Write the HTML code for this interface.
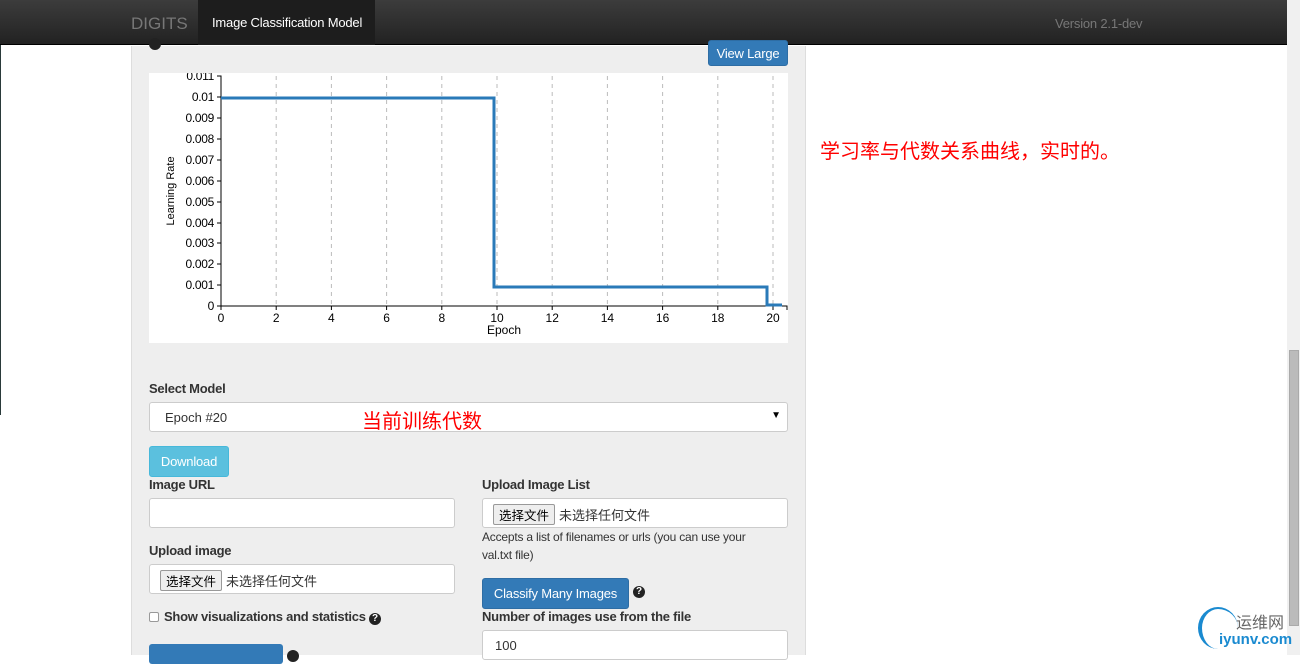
<!DOCTYPE html>
<html><head><meta charset="utf-8"><style>
*{box-sizing:border-box}
body{margin:0;width:1300px;height:655px;overflow:hidden;background:#fff;font-family:"Liberation Sans","Noto Sans CJK SC",sans-serif;position:relative;font-size:13px;color:#333}
.nav{position:absolute;left:0;top:0;width:1287px;height:45px;background:linear-gradient(#3c3c3c,#222);border-bottom:1px solid #000}
.nav .brand{position:absolute;left:131px;top:14px;font-size:17px;color:#777}
.nav .act{position:absolute;left:198px;top:0;width:177px;height:45px;background:#1d1d1d;color:#fff;font-size:13px;padding-top:15px;padding-left:14px;letter-spacing:-0.2px}
.nav .ver{position:absolute;left:1055px;top:16px;color:#777;font-size:13px;letter-spacing:-0.2px}
.panel{position:absolute;left:131px;top:46px;width:675px;height:609px;background:#eeeeee;border-left:1px solid #ddd;border-right:1px solid #ddd}
.abs{position:absolute}
.lbl{position:absolute;font-weight:bold;font-size:13px;color:#333;letter-spacing:-0.25px}
.inp{position:absolute;background:#fff;border:1px solid #ccc;border-radius:3px}
.btn{position:absolute;color:#fff;border-radius:3px;font-size:13px;text-align:center;letter-spacing:-0.2px}
.fb{display:inline-block;background:#eee;border:1px solid #999;border-radius:2px;padding:0 5px;margin:5px 4px 0 10px;font-size:12.5px;color:#000}
.q{display:inline-block;width:12px;height:12px;border-radius:50%;background:#222;color:#fff;font-size:10px;font-weight:bold;text-align:center;line-height:12px;letter-spacing:0}
.red{position:absolute;color:#f00;font-size:20px}
</style></head><body>
<div class="abs" style="left:0;top:45px;width:1px;height:370px;background:#2a3a3a"></div>
<div class="nav"><span class="brand">DIGITS</span><div class="act">Image Classification Model</div><span class="ver">Version 2.1-dev</span></div>
<div class="abs" style="left:1287px;top:0;width:13px;height:655px;background:#f0f0f0"></div>
<div class="abs" style="left:1289px;top:350px;width:10px;height:276px;background:#bbb;border:1px solid #aaa"></div>
<div class="panel"></div>
<div class="abs q" style="left:149px;top:38px"></div>
<div class="btn" style="left:708px;top:40px;width:80px;height:26px;background:#337ab7;border:1px solid #2e6da4;padding-top:5px">View Large</div>
<svg class="abs" style="left:149px;top:73px" width="639" height="270" viewBox="149 73 639 270">
<rect x="149" y="73" width="639" height="270" fill="#fff"/>
<g stroke="#bbb" stroke-dasharray="4,4">
<line x1="276.2" y1="76" x2="276.2" y2="306"/><line x1="331.4" y1="76" x2="331.4" y2="306"/><line x1="386.6" y1="76" x2="386.6" y2="306"/><line x1="441.8" y1="76" x2="441.8" y2="306"/><line x1="497" y1="76" x2="497" y2="306"/><line x1="552.2" y1="76" x2="552.2" y2="306"/><line x1="607.4" y1="76" x2="607.4" y2="306"/><line x1="662.6" y1="76" x2="662.6" y2="306"/><line x1="717.8" y1="76" x2="717.8" y2="306"/><line x1="773" y1="76" x2="773" y2="306"/>
</g>
<g stroke="#000" fill="none"><path d="M217 76H221V306H217M221 306V310M221 306H787V310"/>
<path d="M217 97H221M217 118H221M217 139H221M217 160H221M217 181H221M217 202H221M217 223H221M217 243H221M217 264H221M217 285H221"/>
<path d="M276.2 306v4M331.4 306v4M386.6 306v4M441.8 306v4M497 306v4M552.2 306v4M607.4 306v4M662.6 306v4M717.8 306v4M773 306v4"/></g>
<g font-size="12" fill="#000" text-anchor="end" font-family="Liberation Sans" letter-spacing="-0.3">
<text x="214" y="80">0.011</text><text x="214" y="101">0.01</text><text x="214" y="122">0.009</text><text x="214" y="143">0.008</text><text x="214" y="164">0.007</text><text x="214" y="185">0.006</text><text x="214" y="206">0.005</text><text x="214" y="227">0.004</text><text x="214" y="247">0.003</text><text x="214" y="268">0.002</text><text x="214" y="289">0.001</text><text x="214" y="310">0</text></g>
<g font-size="12" fill="#000" text-anchor="middle" font-family="Liberation Sans">
<text x="221" y="322">0</text><text x="276.2" y="322">2</text><text x="331.4" y="322">4</text><text x="386.6" y="322">6</text><text x="441.8" y="322">8</text><text x="497" y="322">10</text><text x="552.2" y="322">12</text><text x="607.4" y="322">14</text><text x="662.6" y="322">16</text><text x="717.8" y="322">18</text><text x="773" y="322">20</text>
<text x="504" y="334">Epoch</text></g>
<text transform="translate(174,191) rotate(-90)" font-size="11" text-anchor="middle" font-family="Liberation Sans">Learning Rate</text>
<path d="M221 98H494V287H767V305H782" stroke="#2a7ab8" stroke-width="3" fill="none"/>
</svg>
<div class="red" style="left:820px;top:135px">学习率与代数关系曲线，实时的。</div>
<div class="lbl" style="left:149px;top:381px">Select Model</div>
<div class="inp" style="left:149px;top:402px;width:639px;height:30px;padding:7px 15px">Epoch #20<span style="position:absolute;right:6px;top:7px;font-size:10px;color:#000">▼</span></div>
<div class="red" style="left:362px;top:405px">当前训练代数</div>
<div class="btn" style="left:149px;top:446px;width:80px;height:31px;background:#5bc0de;border:1px solid #46b8da;padding-top:7px">Download</div>
<div class="lbl" style="left:149px;top:477px">Image URL</div>
<div class="inp" style="left:149px;top:498px;width:306px;height:30px"></div>
<div class="lbl" style="left:149px;top:543px">Upload image</div>
<div class="inp" style="left:149px;top:564px;width:306px;height:30px"><span class="fb">选择文件</span>未选择任何文件</div>
<div class="abs" style="left:149px;top:612px;width:10px;height:10px;border:1px solid #999;background:#fff;border-radius:2px"></div>
<div class="lbl" style="left:164px;top:609px">Show visualizations and statistics <span class="q">?</span></div>
<div class="btn" style="left:149px;top:644px;width:134px;height:20px;background:#337ab7"></div>
<div class="abs q" style="left:287px;top:650px"></div>
<div class="lbl" style="left:482px;top:477px">Upload Image List</div>
<div class="inp" style="left:482px;top:498px;width:306px;height:30px"><span class="fb">选择文件</span>未选择任何文件</div>
<div class="abs" style="left:482px;top:528px;width:280px;font-size:12px;line-height:18px;letter-spacing:-0.2px">Accepts a list of filenames or urls (you can use your val.txt file)</div>
<div class="btn" style="left:482px;top:578px;width:147px;height:31px;background:#337ab7;border:1px solid #2e6da4;padding-top:7px">Classify Many Images</div>
<div class="abs q" style="left:633px;top:586px">?</div>
<div class="lbl" style="left:482px;top:609px">Number of images use from the file</div>
<div class="inp" style="left:482px;top:630px;width:306px;height:30px;padding:7px 12px">100</div>
<div class="abs" style="left:1198px;top:607px;width:40px;height:42px;border-left:4px solid #1a8ad0;border-top:2px solid #1a8ad0;border-radius:50%"></div>
<div class="abs" style="left:1236px;top:609px;font-size:16px;color:#666">运维网</div>
<div class="abs" style="left:1219px;top:631px;font-size:15px;font-weight:bold;color:#1a8ad0">iyunv.com</div>
</body></html>
